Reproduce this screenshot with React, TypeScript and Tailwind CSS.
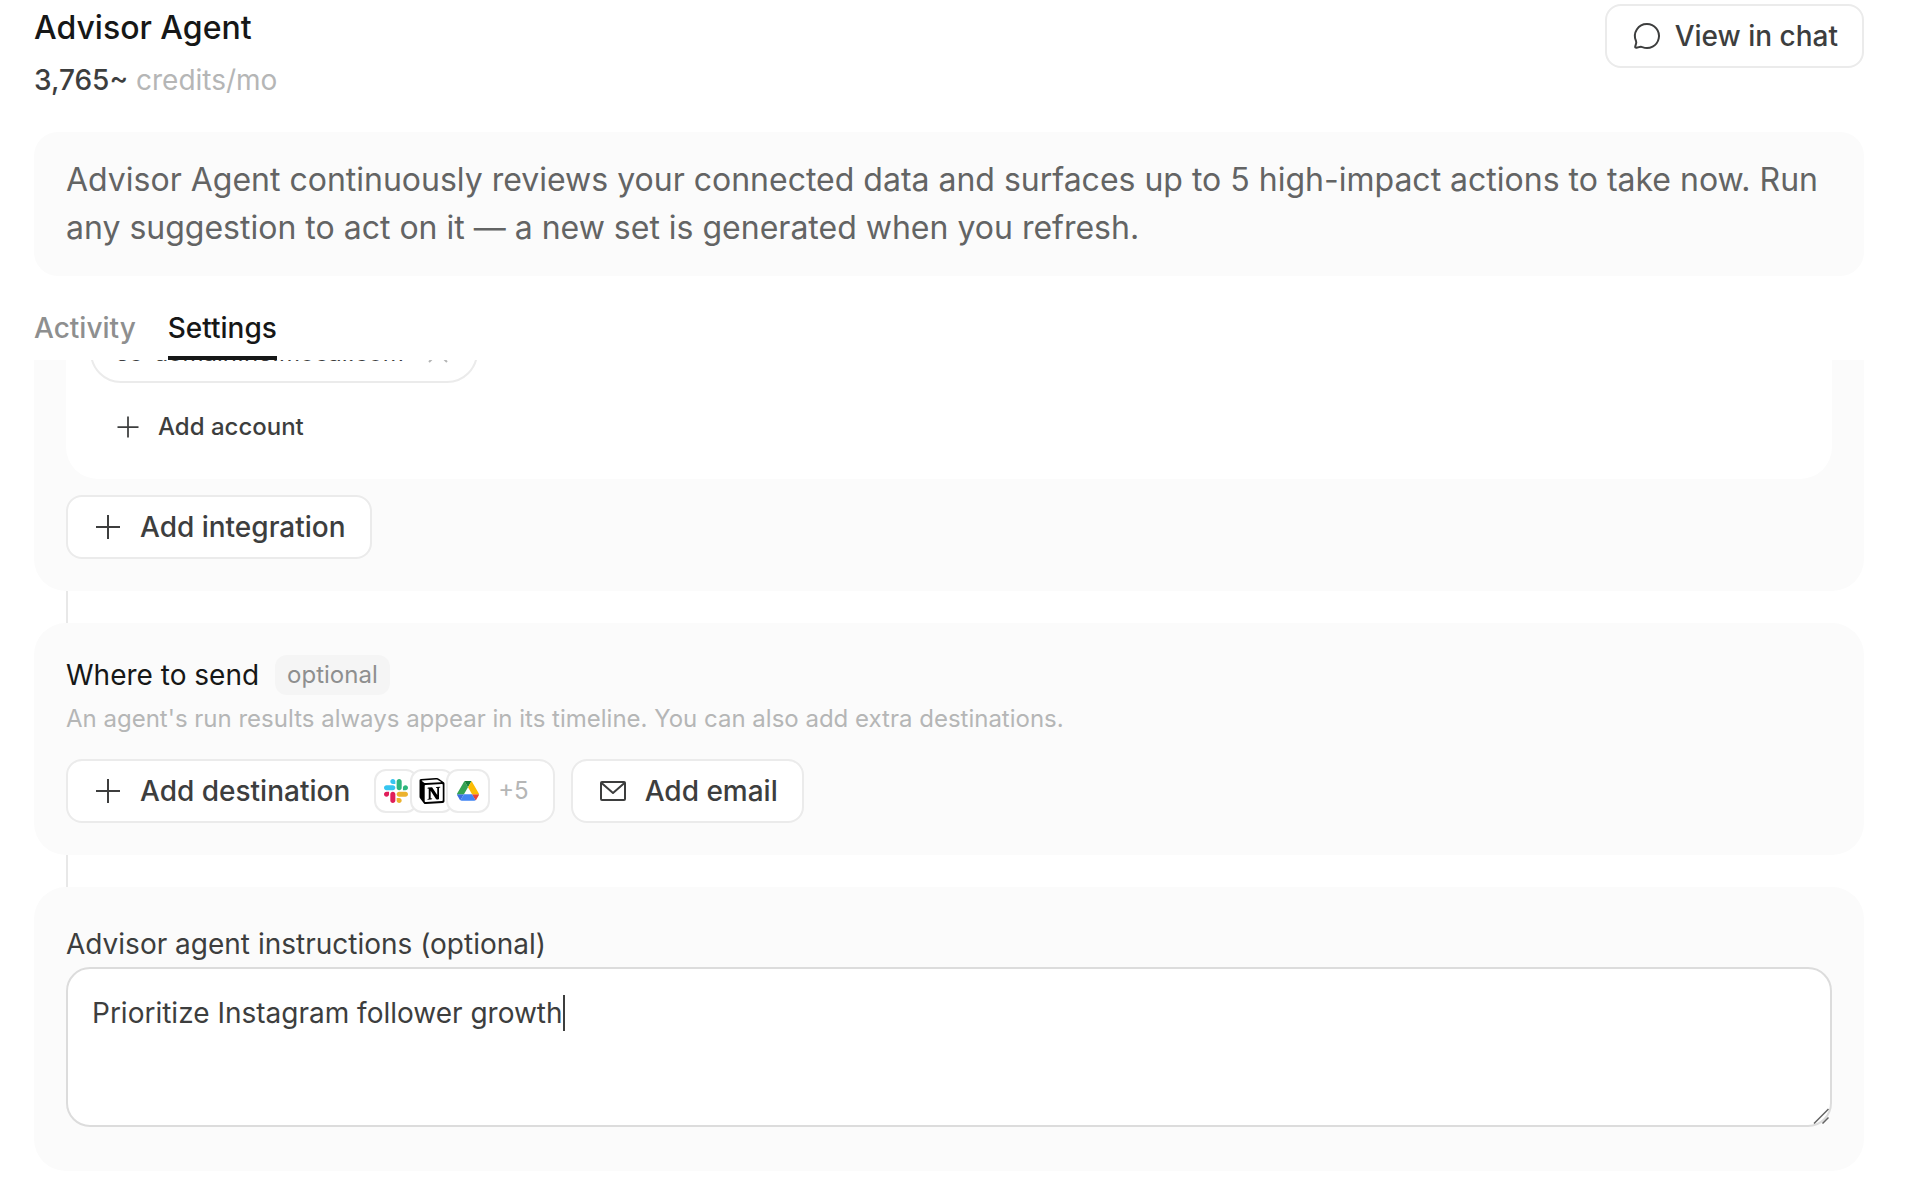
import { useEffect, useLayoutEffect, useRef, useState } from "react";
import type { ReactNode } from "react";

type IconProps = {
  className?: string;
};

function PlusIcon({ className }: IconProps) {
  return (
    <svg viewBox="0 0 32 32" className={className} fill="none" stroke="currentColor" strokeWidth="2">
      <path d="M16 4v24M4 16h24" />
    </svg>
  );
}

function CloseIcon({ className }: IconProps) {
  return (
    <svg viewBox="0 0 28 28" className={className} fill="none" stroke="currentColor" strokeWidth="2">
      <path d="M5 5l18 18M23 5L5 23" />
    </svg>
  );
}

function ChatIcon({ className }: IconProps) {
  return (
    <svg viewBox="0 0 32 32" className={className} fill="none" stroke="currentColor" strokeWidth="2" strokeLinejoin="round">
      <path d="M16 4a12 12 0 1 1-4.6 23.1c-.9-.4-1.600-.4-2.500-.2l-3.400.9c-.9.2-1.500-.3-1.300-1.200l.9-3.100c.3-.9.2-1.600-.1-2.500A12 12 0 0 1 16 4Z" />
    </svg>
  );
}

function MailIcon({ className }: IconProps) {
  return (
    <svg viewBox="0 0 32 32" className={className} fill="none" stroke="currentColor" strokeWidth="2" strokeLinejoin="round">
      <rect x="4" y="7" width="24" height="18" rx="1" />
      <path d="M4 7.500l12 10.500 12-10.500" />
    </svg>
  );
}

function SlackLogo() {
  return (
    <svg viewBox="0 0 122.800 122.800" className="size-6">
      <path fill="#e01e5a" d="M25.800 77.600c0 7.100-5.800 12.900-12.900 12.900S0 84.700 0 77.600s5.800-12.900 12.900-12.900h12.900v12.900zm6.500 0c0-7.100 5.800-12.900 12.900-12.900s12.900 5.800 12.900 12.900v32.300c0 7.100-5.800 12.900-12.900 12.900s-12.900-5.800-12.900-12.900V77.600z" />
      <path fill="#36c5f0" d="M45.200 25.800c-7.100 0-12.900-5.800-12.900-12.900S38.100 0 45.200 0s12.900 5.800 12.900 12.900v12.900H45.200zm0 6.500c7.100 0 12.900 5.800 12.900 12.900s-5.800 12.900-12.900 12.900H12.900C5.800 58.100 0 52.300 0 45.200s5.800-12.900 12.900-12.900h32.300z" />
      <path fill="#2eb67d" d="M97 45.200c0-7.100 5.800-12.900 12.900-12.900s12.900 5.800 12.900 12.900-5.800 12.900-12.900 12.900H97V45.200zm-6.500 0c0 7.100-5.800 12.900-12.900 12.900s-12.900-5.800-12.900-12.900V12.900C64.700 5.800 70.500 0 77.600 0s12.900 5.800 12.900 12.900v32.300z" />
      <path fill="#ecb22e" d="M77.600 97c7.100 0 12.900 5.800 12.900 12.900s-5.800 12.900-12.900 12.900-12.900-5.800-12.900-12.900V97h12.900zm0-6.500c-7.100 0-12.900-5.800-12.900-12.900s5.800-12.900 12.900-12.900h32.300c7.100 0 12.900 5.800 12.900 12.900s-5.800 12.900-12.900 12.900H77.600z" />
    </svg>
  );
}

function NotionLogo() {
  return (
    <svg viewBox="0 0 24 24" className="size-[26px]">
      <path
        fill="#000"
        d="M4.459 4.208c.746.606 1.026.56 2.428.466l13.215-.793c.28 0 .047-.28-.046-.326L17.860 1.968c-.42-.326-.981-.7-2.055-.607L3.010 2.295c-.466.046-.56.280-.374.466zm.793 3.080v13.904c0 .747.373 1.027 1.214.980l14.523-.840c.841-.046.935-.560.935-1.167V6.354c0-.606-.233-.933-.748-.887l-15.177.887c-.560.047-.747.327-.747.933zm14.337.745c.093.420 0 .840-.420.888l-.700.140v10.264c-.608.327-1.168.514-1.635.514-.748 0-.935-.234-1.495-.933l-4.577-7.186v6.952L12.210 19s0 .840-1.168.840l-3.222.186c-.093-.186 0-.653.327-.746l.840-.233V9.854L7.822 9.760c-.094-.420.140-1.026.793-1.073l3.456-.233 4.764 7.279v-6.440l-1.215-.139c-.093-.514.280-.887.747-.933zM1.936 1.035l13.310-.980c1.634-.140 2.055-.047 3.082.700l4.249 2.986c.700.513.934.653.934 1.213v16.378c0 1.026-.373 1.634-1.680 1.726l-15.458.934c-.980.047-1.448-.093-1.962-.747l-3.129-4.060c-.560-.747-.793-1.306-.793-1.960V2.667c0-.839.374-1.540 1.447-1.632z"
      />
    </svg>
  );
}

function DriveLogo() {
  return (
    <svg viewBox="0 0 87.300 78" className="w-[22px]">
      <path fill="#3b6fe0" d="M6.600 66.850l3.850 6.650c.8 1.400 1.950 2.500 3.300 3.300L27.500 53H0c0 1.550.4 3.100 1.200 4.500z" />
      <path fill="#34a353" d="M43.650 25L29.900 1.200c-1.350.8-2.500 1.900-3.300 3.300L1.200 48.500A9.060 9.060 0 0 0 0 53h27.500z" />
      <path fill="#ea4335" d="M73.550 76.800c1.350-.8 2.500-1.900 3.300-3.300l1.600-2.750L86.100 57.500c.8-1.400 1.200-2.950 1.200-4.500H59.798l5.852 11.500z" />
      <path fill="#188038" d="M43.650 25L57.400 1.200C56.050.4 54.500 0 52.900 0H34.400c-1.600 0-3.150.45-4.500 1.200z" />
      <path fill="#4285f4" d="M59.800 53H27.500L13.750 76.800c1.350.8 2.900 1.200 4.500 1.200h50.800c1.600 0 3.150-.45 4.500-1.200z" />
      <path fill="#fbbc04" d="M73.400 26.500l-12.700-22c-.8-1.400-1.950-2.500-3.300-3.300L43.650 25 59.800 53h27.450c0-1.550-.4-3.100-1.200-4.500z" />
    </svg>
  );
}

type OutlineButtonProps = {
  icon: ReactNode;
  label: string;
  className?: string;
  children?: ReactNode;
};

function OutlineButton({ icon, label, className = "gap-4", children }: OutlineButtonProps) {
  return (
    <button
      type="button"
      className={`flex h-16 items-center rounded-2xl border-2 border-[#ebebeb] bg-white px-6 text-[28px] font-medium text-[#3d3e3e] ${className}`}
    >
      {icon}
      <span>{label}</span>
      {children}
    </button>
  );
}

function AppBadge({ children }: { children: ReactNode }) {
  return (
    <span className="flex size-11 shrink-0 items-center justify-center rounded-xl border-2 border-[#ebebeb] bg-white">
      {children}
    </span>
  );
}

function Connector() {
  return <div className="ml-8 h-8 w-0.5 bg-[#e8e8e8]" />;
}

function InstructionsInput() {
  const [value, setValue] = useState<string>("Prioritize Instagram follower growth");
  const [textWidth, setTextWidth] = useState<number>(0);
  const inputRef = useRef<HTMLTextAreaElement>(null);

  useEffect(() => {
    inputRef.current?.focus();
  }, []);

  // the caret is drawn by hand, right after the text
  useLayoutEffect(() => {
    const ctx = document.createElement("canvas").getContext("2d");
    if (!ctx) return;
    ctx.font = "28px Inter";
    setTextWidth(Math.round(ctx.measureText(value).width));
  }, [value]);

  return (
    <div className="relative mt-0.5 flex">
      <textarea
        id="instructions"
        ref={inputRef}
        value={value}
        onChange={(event) => setValue(event.target.value)}
        className="h-40 w-full resize-none rounded-3xl border-2 border-[#dcdcdc] bg-white p-6 text-[28px] leading-10 caret-transparent outline-none"
      />
      <span className="pointer-events-none absolute top-7 ml-6 h-9 w-0.5 bg-[#3d3e3e]" style={{ left: textWidth + 2 }} />
      <svg
        viewBox="0 0 16 16"
        className="pointer-events-none absolute right-[3px] bottom-[3px] size-4"
        fill="none"
        stroke="#646464"
        strokeWidth="1.500"
      >
        <path d="M1 15.500L15.500 1M9.500 15.500l6-6" />
      </svg>
    </div>
  );
}

export default function App() {
  return (
    <main className="min-h-screen bg-white pr-12 pb-3 pl-[34px] font-['Inter',sans-serif] text-[#3d3e3e]">
      <header className="flex items-start justify-between pt-1">
        <div>
          <h1 className="text-[32px] leading-12 font-medium text-[#161717]">Advisor Agent</h1>
          <p className="mt-2 text-[28px] leading-10">
            <span className="font-medium">3,765~</span> <span className="text-[#b5b6b6]">credits/mo</span>
          </p>
        </div>
        <OutlineButton icon={<ChatIcon className="size-8" />} label="View in chat" className="gap-3" />
      </header>

      <p className="mt-8 rounded-3xl bg-[#fbfbfb] px-8 py-6 text-[32px] leading-12 text-[#636464]">
        Advisor Agent continuously reviews your connected data and surfaces up to 5 high-impact actions to take now. Run
        any suggestion to act on it — a new set is generated when you refresh.
      </p>

      <nav className="mt-8 flex gap-8 text-[28px] leading-10 font-medium">
        <button type="button" className="border-b-4 border-transparent pb-2 text-[#8e8f8f]">
          Activity
        </button>
        <button type="button" className="border-b-4 border-[#161717] pb-2 text-[#161717]">
          Settings
        </button>
      </nav>

      <div className="flex flex-col overflow-hidden">
        <section className="rounded-b-[32px] bg-[#fbfbfb] px-8 pb-8">
          <div className="flex flex-col items-start rounded-b-[32px] bg-white px-6 pb-6">
            <div className="-mt-[39px] flex h-[62px] items-center gap-5 rounded-full border-2 border-[#ebebeb] px-6 pt-0.5 text-2xl">
              <span>sc-domain:he.mocai.com</span>
              <button type="button" aria-label="Remove account" className="text-[#b5b6b6]">
                <CloseIcon className="size-7" />
              </button>
            </div>
            <button type="button" className="mt-4 flex h-14 items-center gap-4 px-6 text-2xl font-medium">
              <PlusIcon className="size-7" />
              Add account
            </button>
          </div>
          <div className="mt-4 flex">
            <OutlineButton icon={<PlusIcon className="size-8" />} label="Add integration" />
          </div>
        </section>

        <Connector />

        <section className="rounded-[32px] bg-[#fbfbfb] p-8">
          <div className="flex items-center gap-4">
            <h2 className="text-[28px] leading-10 text-[#161717]">Where to send</h2>
            <span className="rounded-xl bg-[#f5f5f5] px-3 text-2xl leading-10 text-[#8e8f8f]">optional</span>
          </div>
          <p className="mt-2 text-2xl text-[#b5b6b6]">
            An agent's run results always appear in its timeline. You can also add extra destinations.
          </p>
          <div className="mt-6 flex gap-4">
            <OutlineButton icon={<PlusIcon className="size-8" />} label="Add destination">
              <span className="ml-2 flex items-center gap-2">
                <span className="flex items-center -space-x-2">
                  <AppBadge>
                    <SlackLogo />
                  </AppBadge>
                  <AppBadge>
                    <NotionLogo />
                  </AppBadge>
                  <AppBadge>
                    <DriveLogo />
                  </AppBadge>
                </span>
                <span className="text-2xl font-normal text-[#b5b6b6]">+5</span>
              </span>
            </OutlineButton>
            <OutlineButton icon={<MailIcon className="size-8" />} label="Add email" />
          </div>
        </section>

        <Connector />

        <section className="flex flex-col rounded-[32px] bg-[#fbfbfb] px-8 pt-9 pb-11">
          <label htmlFor="instructions" className="text-[28px] leading-[42px]">
            Advisor agent instructions (optional)
          </label>
          <InstructionsInput />
        </section>
      </div>
    </main>
  );
}
